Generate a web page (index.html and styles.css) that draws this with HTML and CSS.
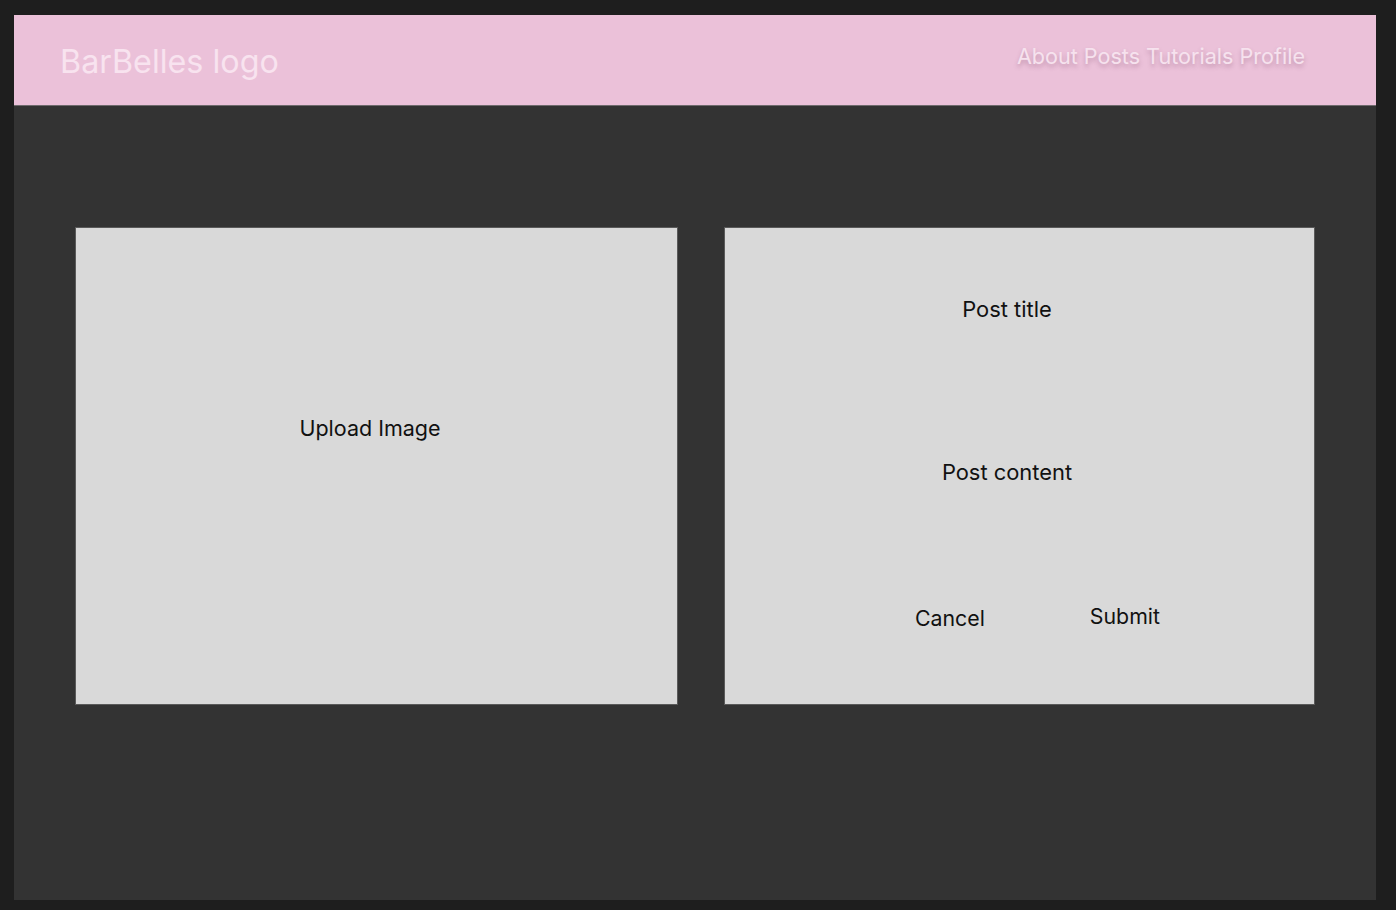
FILE: index.html
```html
<!DOCTYPE html>
<html lang="en">
<head>
<meta charset="utf-8">
<title>BarBelles - New Post</title>
<link rel="stylesheet" href="styles.css">
</head>
<body>
<div class="frame">
  <header class="header">
    <div class="logo">BarBelles logo</div>
    <nav class="nav">
      <a href="#">About</a>
      <a href="#">Posts</a>
      <a href="#">Tutorials</a>
      <a href="#">Profile</a>
    </nav>
  </header>
  <main class="main">
    <section class="upload">
      <span class="label">Upload Image</span>
    </section>
    <section class="form">
      <div class="field title">Post title</div>
      <div class="field content">Post content</div>
      <div class="actions">
        <button class="btn cancel" type="button">Cancel</button>
        <button class="btn submit" type="submit">Submit</button>
      </div>
    </section>
  </main>
</div>
</body>
</html>
```

FILE: styles.css
```css
html, body {
  margin: 0;
  padding: 0;
}
body {
  background: #1e1e1e;
  font-family: Inter, "Noto Sans", "Liberation Sans", sans-serif;
  padding: 15px 20px 10px 14px;
  box-sizing: border-box;
  height: 910px;
}
.frame {
  width: 1362px;
  height: 885px;
  background: #333333;
  display: flex;
  flex-direction: column;
}
.header {
  height: 90px;
  background: #ebc1d9;
  border-bottom: 1px solid #6f6a6d;
  display: flex;
  align-items: flex-start;
  justify-content: space-between;
  padding: 0 71px 0 46px;
}
.logo {
  color: #f8e3ef;
  font-size: 32.3px;
  line-height: 40px;
  margin-top: 27px;
}
.nav {
  display: flex;
  gap: 6px;
  margin-top: 27px;
}
.nav a {
  color: #f6e2ee;
  text-decoration: none;
  font-size: 21.6px;
  line-height: 28px;
  text-shadow: 0 3px 4px rgba(120, 70, 100, 0.35);
}
.main {
  display: flex;
  align-items: flex-start;
  gap: 46px;
  padding: 121px 0 0 61px;
}
.upload, .form {
  background: #d9d9d9;
  border: 1px solid #5a5a5a;
  height: 478px;
  box-sizing: border-box;
  color: #111111;
  font-size: 21px;
  line-height: 24px;
}
.upload {
  width: 603px;
  display: flex;
  justify-content: center;
  padding: 188px 13px 0 0;
  font-size: 21.5px;
}
.form {
  width: 591px;
  display: flex;
  flex-direction: column;
  align-items: center;
  padding: 69px 25px 0 0;
}
.field {
  font-size: 21.9px;
}
.field.content {
  margin-top: 139px;
}
.actions {
  align-self: stretch;
  display: flex;
  align-items: flex-start;
  gap: 105px;
  padding-left: 190px;
  margin-top: 122px;
}
.btn {
  background: none;
  border: none;
  padding: 0;
  font: inherit;
  font-size: 21.3px;
  color: #111111;
  cursor: pointer;
}
.btn.submit {
  margin-top: -2px;
}
```
